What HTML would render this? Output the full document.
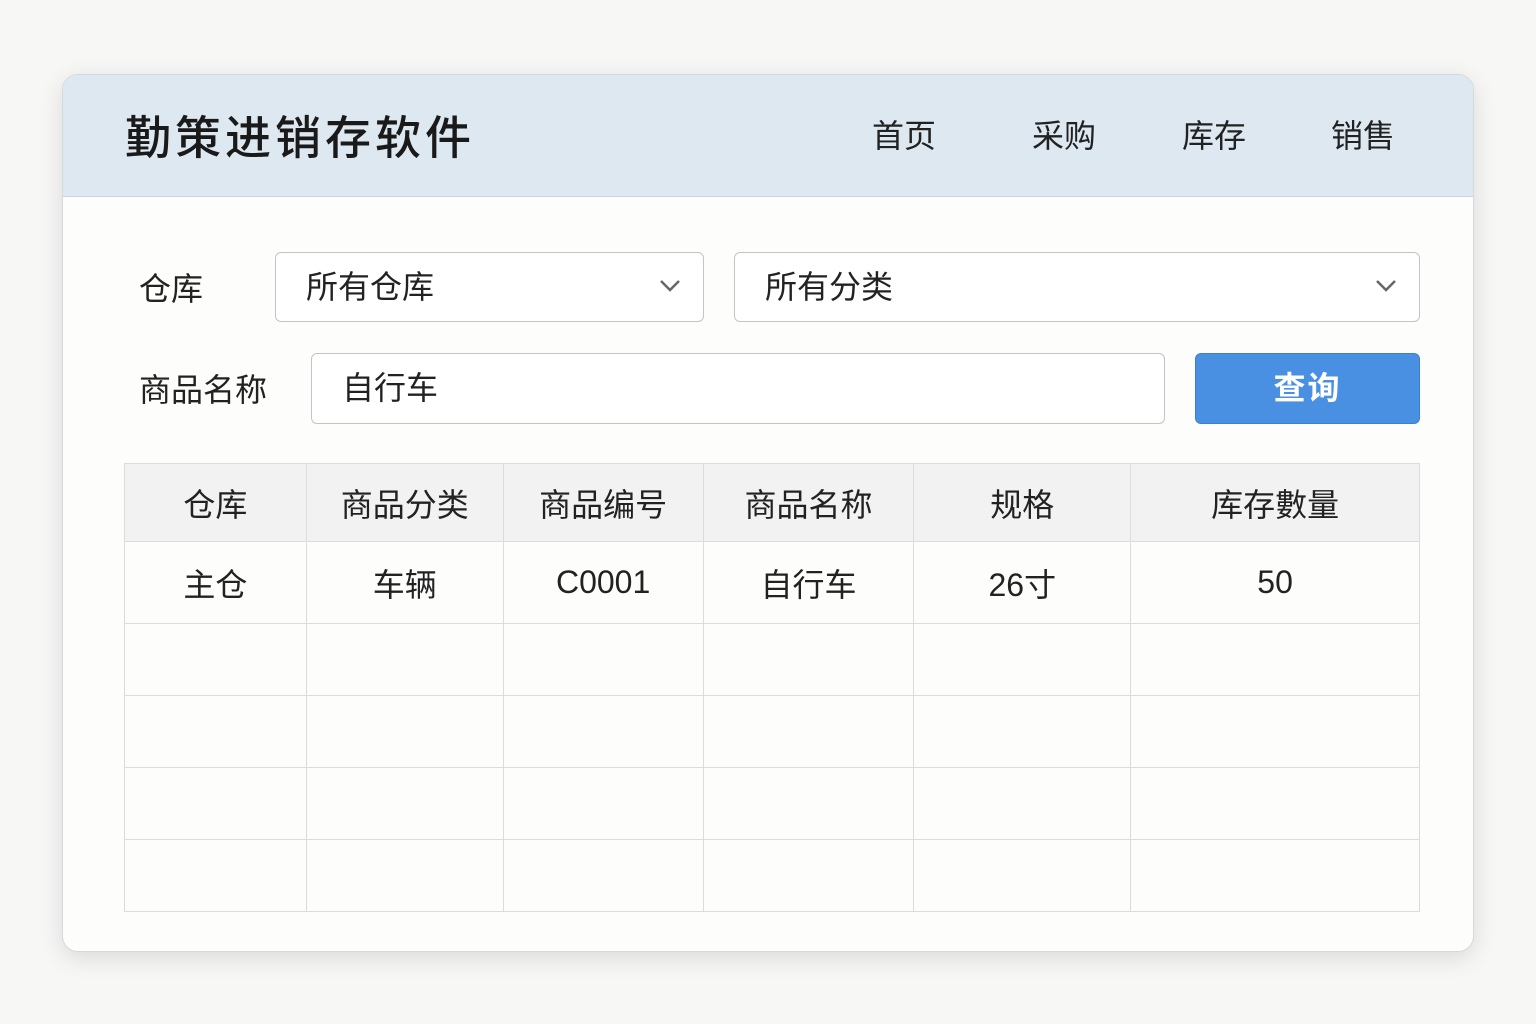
<!DOCTYPE html>
<html><head><meta charset="utf-8"><style>
*{box-sizing:border-box;margin:0;padding:0}
body{width:1536px;height:1024px;background:#f7f7f6;font-family:"Liberation Sans","Noto Sans CJK SC",sans-serif;position:relative;overflow:hidden;color:#1f1f1f}
.card{position:absolute;left:62px;top:74px;width:1412px;height:878px;background:#fdfdfc;border:1px solid #d6d9dc;border-radius:16px;box-shadow:0 6px 24px rgba(0,0,0,.12);overflow:hidden}
.hdr{position:absolute;left:0;top:0;width:100%;height:122px;background:#dde8f1;border-bottom:1px solid #c9d6e2}
.title{position:absolute;left:62px;top:27px;font-size:46px;font-weight:500;letter-spacing:4px;color:#1a1a1a}
.nav{position:absolute;top:36px;font-size:32px;transform:translateX(-50%);color:#222}
.lbl{position:absolute;font-size:32px;color:#222}
.box{position:absolute;border:1px solid #c4c4c4;border-radius:6px;background:#fff;font-size:32px;line-height:68px;padding-left:30px;color:#222}
.chev{position:absolute;right:22px;top:26px}
.btn{position:absolute;left:1132px;top:278px;width:225px;height:71px;background:#4a90e2;border:1px solid #3b7fd0;border-radius:6px;color:#fff;font-size:32px;font-weight:bold;text-align:center;line-height:69px;letter-spacing:2px}
table{position:absolute;left:61px;top:388px;width:1296px;border-collapse:collapse;font-size:32px}
td,th{border:1px solid #dcdcdc;text-align:center;font-weight:normal;color:#222}
th{background:#f2f2f2;height:78px}
tr.r1 td{height:82px}
tr.e td{height:72px}
</style></head><body>
<div class="card">
 <div class="hdr">
  <div class="title">勤策进销存软件</div>
  <div class="nav" style="left:841px">首页</div>
  <div class="nav" style="left:1001px">采购</div>
  <div class="nav" style="left:1151px">库存</div>
  <div class="nav" style="left:1300px">销售</div>
 </div>
 <div class="lbl" style="left:76px;top:189px">仓库</div>
 <div class="box" style="left:212px;top:177px;width:429px;height:70px">所有仓库<svg class="chev" width="22" height="14" viewBox="0 0 22 14"><path d="M2 2l9 9 9-9" fill="none" stroke="#666" stroke-width="2.5"/></svg></div>
 <div class="box" style="left:671px;top:177px;width:686px;height:70px">所有分类<svg class="chev" width="22" height="14" viewBox="0 0 22 14"><path d="M2 2l9 9 9-9" fill="none" stroke="#666" stroke-width="2.5"/></svg></div>
 <div class="lbl" style="left:76px;top:290px">商品名称</div>
 <div class="box" style="left:248px;top:278px;width:854px;height:71px">自行车</div>
 <div class="btn">查询</div>
 <table>
  <colgroup><col style="width:182px"><col style="width:197px"><col style="width:200px"><col style="width:211px"><col style="width:217px"><col style="width:289px"></colgroup>
  <tr><th>仓库</th><th>商品分类</th><th>商品编号</th><th>商品名称</th><th>规格</th><th>库存數量</th></tr>
  <tr class="r1"><td>主仓</td><td>车辆</td><td>C0001</td><td>自行车</td><td>26寸</td><td>50</td></tr>
  <tr class="e"><td></td><td></td><td></td><td></td><td></td><td></td></tr>
  <tr class="e"><td></td><td></td><td></td><td></td><td></td><td></td></tr>
  <tr class="e"><td></td><td></td><td></td><td></td><td></td><td></td></tr>
  <tr class="e"><td></td><td></td><td></td><td></td><td></td><td></td></tr>
 </table>
</div>
</body></html>
